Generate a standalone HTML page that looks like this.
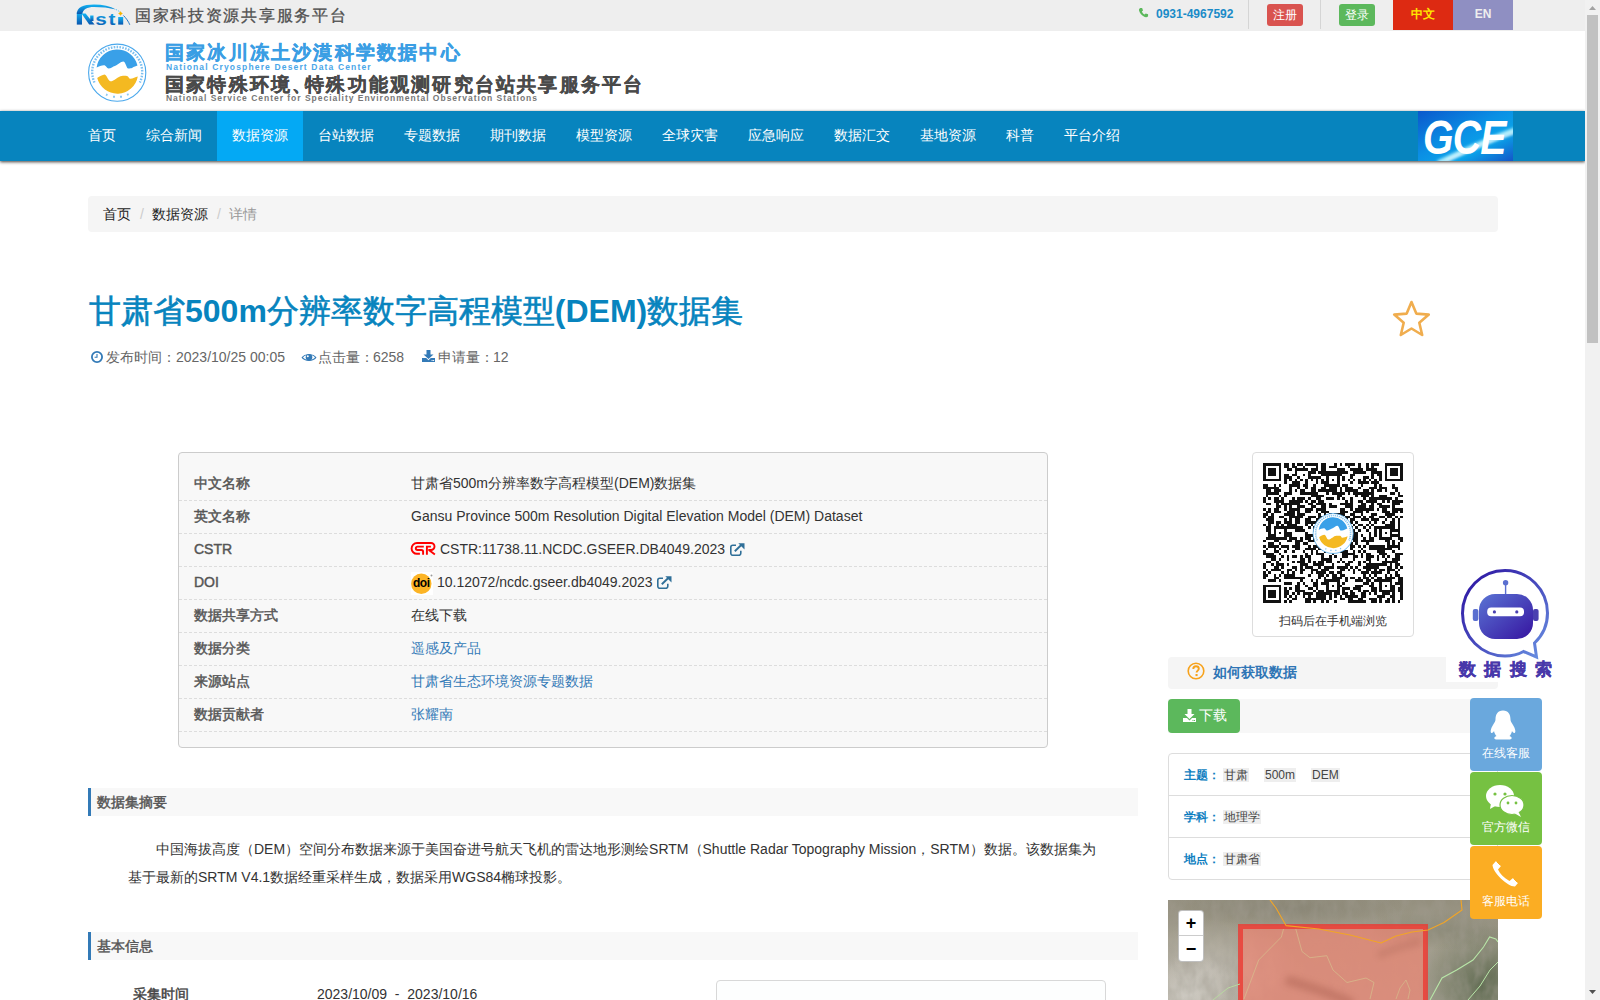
<!DOCTYPE html>
<html><head><meta charset="utf-8">
<style>
*{box-sizing:border-box;margin:0;padding:0}
html,body{width:1600px;height:1000px;overflow:hidden;background:#fff}
body{font-family:"Liberation Sans",sans-serif;font-size:14px;color:#333;position:relative;line-height:20px}
.abs{position:absolute}
#topbar{position:absolute;left:0;top:0;width:1585px;height:31px;background:#eeeeee}
#header{position:absolute;left:0;top:31px;width:1585px;height:80px;background:#fff}
#nav{position:absolute;left:0;top:111px;width:1585px;height:50px;background:#0784be;box-shadow:0 1px 3px 0 rgba(20,15,10,.8)}
#nav a{position:absolute;top:0;height:50px;line-height:49px;color:#fff;font-size:14px;padding:0 15px;text-decoration:none;white-space:nowrap}
#nav a.act{background:#04a9f4}
#scroll{position:absolute;left:1585px;top:0;width:15px;height:1000px;background:#f1f1f1}
#thumb{position:absolute;left:2px;top:15px;width:11px;height:328px;background:#c1c1c1}
.crumb{position:absolute;left:88px;top:196px;width:1410px;height:36px;background:#f5f5f5;border-radius:4px;padding:8px 15px;color:#222}
.crumb .sep{color:#ccc;padding:0 8px 0 9px}
.crumb .cur{color:#999}
h1{position:absolute;left:89px;top:288px;font-size:32px;line-height:46px;color:#0784be;font-weight:bold;white-space:nowrap}
h1 .cj{font-weight:normal;-webkit-text-stroke:.6px #0784be}
.meta{position:absolute;left:0;top:0;color:#666;white-space:nowrap}
.meta span{top:347px}
.panel{position:absolute;left:178px;top:452px;width:870px;height:296px;background:#f8f8f8;border:1px solid #ccc;border-radius:4px}
.row{position:absolute;left:0;width:868px;height:33px;border-bottom:1px dashed #ddd;line-height:30px}
.row .k{position:absolute;left:15px;font-weight:normal;color:#555;-webkit-text-stroke:.45px #555}
.row .v{position:absolute;left:232px;color:#333;white-space:nowrap}
.row .v.link{color:#337ab7}
.sec{position:absolute;left:88px;width:1050px;height:28px;background:#f8f8f8;border-left:3px solid #337ab7;line-height:28px;padding-left:6px;font-weight:normal;color:#555;-webkit-text-stroke:.45px #555}
.para{position:absolute;left:128px;top:835px;width:980px;line-height:28px;color:#333;text-indent:28px}
.kw{white-space:nowrap;line-height:16px}
.kw b{color:#0e7ec0;font-weight:bold}
.kw i{font-style:normal;background:#eee;color:#444;padding:0 1px}
.fb{left:1470px;width:72px;height:73px;border-radius:4px}
.fb span{position:absolute;left:0;top:47px;width:72px;text-align:center;color:#fff;font-size:12px;line-height:16px}
</style></head><body>
<div id="topbar">
<svg class="abs" style="left:72px;top:0" width="62" height="30" viewBox="0 0 62 30">
<defs><linearGradient id="ng" x1="0" y1="0" x2="0" y2="1"><stop offset="0" stop-color="#12b4f4"/><stop offset="1" stop-color="#0a56ae"/></linearGradient></defs>
<g fill="url(#ng)">
<rect x="4.8" y="12" width="5.2" height="12.6"/>
<path d="M4.8 14 C4.8 7.5, 11 4.6, 22 4.6 C 31 4.6, 38 6.5, 44 9.5 C 37 7.6, 30 6.9, 22 6.9 C 15 6.9, 10.8 9, 10.4 14 Z"/>
<path d="M9.5 13.5 L 13.6 13.5 L 22.6 24.6 L 17.2 24.6 Z"/>
<rect x="18.2" y="15.5" width="3.3" height="5.5"/>
<g transform="translate(23.2,24.6) scale(1.22,1)"><text x="0" y="0" font-family="Liberation Sans" font-weight="bold" font-size="17">s</text></g>
<g transform="translate(36.6,24.6) scale(1.3,1)"><text x="0" y="0" font-family="Liberation Sans" font-weight="bold" font-size="16">t</text></g>
<rect x="46.2" y="17" width="5" height="7.6"/>
</g>
<path d="M44 9.5 C 46 10.5, 47.5 11.5, 48.5 12.5" stroke="#5cc6f4" stroke-width="1" fill="none" stroke-dasharray="1 1"/>
<path d="M51.5 15.5 C 54 18, 56.5 21.5, 57.8 24.8" stroke="#2a7cc8" stroke-width="1" fill="none"/>
<path d="M48.5 11.3 l0.9 1.3 1.4 0.9 -1.4 0.9 -0.9 1.4 -0.9 -1.4 -1.4 -0.9 1.4 -0.9z" fill="#f7b500"/>
</svg>
<div class="abs" style="left:135px;top:6px;font-size:16px;line-height:20px;letter-spacing:1.7px;color:#505050;white-space:nowrap;-webkit-text-stroke:.3px #505050">国家科技资源共享服务平台</div>
<svg class="abs" style="left:1138px;top:7px" width="11" height="11" viewBox="0 0 12 12"><path d="M2.5 1 L4.5 1 L5.5 3.8 L4.2 5 C5 6.8 5.8 7.6 7.2 8.2 L8.4 7 L11 8 L11 10 C10 11.5 8 11.5 6 10.2 C3.8 8.8 2 6.5 1.2 4 C0.8 2.6 1.4 1.5 2.5 1Z" fill="#5cb85c"/></svg>
<div class="abs" style="left:1156px;top:6px;font-size:12px;line-height:16px;font-weight:bold;color:#1a8bc8;white-space:nowrap">0931-4967592</div>
<div class="abs" style="left:1248px;top:0;width:1px;height:29px;background:#d5d5d5"></div>
<div class="abs" style="left:1267px;top:4px;width:36px;height:22px;background:#d9534f;border-radius:3px;color:#fff;font-size:12px;line-height:22px;text-align:center">注册</div>
<div class="abs" style="left:1320px;top:0;width:1px;height:29px;background:#d5d5d5"></div>
<div class="abs" style="left:1339px;top:4px;width:36px;height:22px;background:#5cb85c;border-radius:3px;color:#fff;font-size:12px;line-height:22px;text-align:center">登录</div>
<div class="abs" style="left:1393px;top:0;width:60px;height:30px;background:#dd2a12;color:#ffe600;font-size:12px;line-height:28px;text-align:center;font-weight:bold">中文</div>
<div class="abs" style="left:1453px;top:0;width:60px;height:30px;background:#8f8fc2;color:#eee;font-size:12px;line-height:28px;text-align:center;font-weight:bold">EN</div>
</div>
<div id="header">
<svg class="abs" style="left:87px;top:11px" width="60" height="60" viewBox="0 0 60 60">
<circle cx="30.2" cy="30.7" r="28.6" fill="#fff" stroke="#4aa8ec" stroke-width="1.1"/>
<path d="M7.5 40.5 A25 25 0 1 1 52.9 40.5" fill="none" stroke="#7dc0f0" stroke-width="2.4" stroke-dasharray="1.6 1.3"/><path d="M19 52.5 l1.5 0.6 M26 54.8 h2 M33 54.8 h2 M40 52.8 l1.6 -0.7" stroke="#8cc8f2" stroke-width="2"/>
<path d="M9.6 25.6 C 12 24.5, 15 23, 17.6 23.3 C 19 24, 20 26.5, 21.4 26.5 C 24 26.5, 26 24.5, 27.8 24 C 31 22.5, 34 19.5, 36.1 19.5 C 38.5 19.2, 39.5 26.5, 41.2 26.5 C 43 26.5, 44 26, 45 25.9 C 47 25, 49 24, 50.5 23.6 A 20.8 20.8 0 0 0 9.6 25.6Z" fill="#39a0e8"/>
<path d="M10.2 36.1 C 12.5 34.5, 15.5 32.8, 17.6 32.6 C 20 33, 21 39, 23.3 39.3 C 27 39.5, 31 34, 34.8 33.9 C 37 33.8, 39 33.9, 40 33.9 C 41.5 34, 42 36.8, 43.2 36.8 C 46 36.5, 48.5 35.2, 50.8 34.5 A 20.8 20.8 0 0 1 10.2 36.1Z" fill="#f4b921"/>
</svg>
<div class="abs" style="left:165px;top:11px;font-size:19px;line-height:22px;font-weight:900;letter-spacing:2.2px;color:#3a9ee4;white-space:nowrap;-webkit-text-stroke:.35px #3a9ee4">国家冰川冻土沙漠科学数据中心</div>
<div class="abs" style="left:166px;top:32px;font-size:8.5px;line-height:9px;font-weight:bold;letter-spacing:1.15px;color:#4aa6e8;white-space:nowrap">National Cryosphere Desert Data Center</div>
<div class="abs" style="left:165px;top:43px;font-size:19px;line-height:22px;font-weight:900;letter-spacing:2.2px;color:#4a4a4a;white-space:nowrap;-webkit-text-stroke:.35px #4a4a4a">国家特殊环境<span style="letter-spacing:-9px">、</span><span style="margin-left:3px"></span>特殊功能观测研究台站共享服务平台</div>
<div class="abs" style="left:166px;top:63px;font-size:8.5px;line-height:9px;font-weight:bold;letter-spacing:0.98px;color:#777;white-space:nowrap">National Service Center for Speciality Environmental Observation Stations</div>
</div>
<div id="nav">
<a style="left:73px">首页</a>
<a style="left:131px">综合新闻</a>
<a class="act" style="left:217px">数据资源</a>
<a style="left:303px">台站数据</a>
<a style="left:389px">专题数据</a>
<a style="left:475px">期刊数据</a>
<a style="left:561px">模型资源</a>
<a style="left:647px">全球灾害</a>
<a style="left:733px">应急响应</a>
<a style="left:819px">数据汇交</a>
<a style="left:905px">基地资源</a>
<a style="left:991px">科普</a>
<a style="left:1049px">平台介绍</a>
<svg class="abs" style="left:1418px;top:0" width="95" height="50" viewBox="0 0 95 50">
<defs>
<linearGradient id="gbg" x1="0" y1="0" x2="1" y2="1"><stop offset="0" stop-color="#0a58cc"/><stop offset=".45" stop-color="#0b8fe4"/><stop offset=".7" stop-color="#0aa4ea"/><stop offset="1" stop-color="#1456c8"/></linearGradient>
<filter id="gbl" x="-50%" y="-50%" width="200%" height="200%"><feGaussianBlur stdDeviation="1.6"/></filter>
</defs>
<rect width="95" height="50" fill="url(#gbg)"/>
<path d="M20 52 C 45 40, 70 28, 100 18" stroke="#bff6ff" stroke-width="5" fill="none" filter="url(#gbl)" opacity=".9"/>
<path d="M28 50 C 50 40, 72 30, 96 22" stroke="#fff" stroke-width="1.6" fill="none" filter="url(#gbl)"/>
<g transform="translate(5,43) scale(0.8,1)"><text x="0" y="0" font-family="Liberation Sans" font-weight="bold" font-style="italic" font-size="49" fill="#fff" letter-spacing="-1">GCE</text></g>
</svg>
</div>
</div>

<div class="crumb">首页<span class="sep">/</span>数据资源<span class="sep">/</span><span class="cur">详情</span></div>

<h1><span class="cj">甘肃省</span>500m<span class="cj">分辨率数字高程模型</span>(DEM)<span class="cj">数据集</span></h1>
<div class="meta">
<svg class="abs" style="left:91px;top:351px" width="12" height="12" viewBox="0 0 12 12"><circle cx="6" cy="6" r="5.1" fill="none" stroke="#337ab7" stroke-width="1.8"/><path d="M6 3v3.2H3.6" fill="none" stroke="#337ab7" stroke-width="1.1"/></svg>
<span class="abs" style="left:106px">发布时间：</span><span class="abs" style="left:176px">2023/10/25 00:05</span>
<svg class="abs" style="left:301px;top:352px" width="16" height="11" viewBox="0 0 16 11"><path d="M0.5 5.5 C 3 1, 13 1, 15.5 5.5 C 13 10, 3 10, 0.5 5.5Z" fill="#337ab7"/><path d="M2 5.5 C 4.5 2.3, 11.5 2.3, 14 5.5 C 11.5 8.7, 4.5 8.7, 2 5.5Z" fill="#fff"/><circle cx="8" cy="5.3" r="3.3" fill="#337ab7"/><circle cx="6.8" cy="4.2" r="1" fill="#fff"/></svg>
<span class="abs" style="left:318px">点击量：</span><span class="abs" style="left:373px">6258</span>
<svg class="abs" style="left:422px;top:350px" width="13" height="12" viewBox="0 0 13 12"><path d="M4.5 0h4v4.5h3l-5 4.5-5-4.5h3z" fill="#337ab7"/><path d="M0 8h4.2l2.3 2.2L8.8 8H13v4H0z" fill="#337ab7"/><rect x="9.6" y="10" width="1" height="1" fill="#fff"/><rect x="11.1" y="10" width="1" height="1" fill="#fff"/></svg>
<span class="abs" style="left:438px">申请量：</span><span class="abs" style="left:493px">12</span>
</div>

<div class="panel">
<div class="row" style="top:15px"><span class="k">中文名称</span><span class="v">甘肃省500m分辨率数字高程模型(DEM)数据集</span></div>
<div class="row" style="top:48px"><span class="k">英文名称</span><span class="v">Gansu Province 500m Resolution Digital Elevation Model (DEM) Dataset</span></div>
<div class="row" style="top:81px"><span class="k">CSTR</span><svg class="abs" style="left:230px;top:5px" width="30" height="19" viewBox="0 0 30 19"><g fill="none" stroke="#f00" stroke-width="1.9"><path d="M10.9 14.8H8A5.4 5.4 0 0 1 8 4H22A3.5 3.5 0 0 1 22 11H19.3"/><path d="M14.8 7.6H8.5A1.7 1.7 0 0 0 8.5 11H12.3A1.8 1.8 0 0 1 14.1 12.8V15.7"/><path d="M17.9 15.7V7.6H21.9"/><path d="M20.2 11.2L25.9 15.5"/></g></svg><span class="v" style="left:261px">CSTR:11738.11.NCDC.GSEER.DB4049.2023</span><svg class="abs" style="left:551px;top:9px" width="15" height="13" viewBox="0 0 15 13"><path d="M6 2.3H2.8A2 2 0 0 0 0.8 4.3V10.3A2 2 0 0 0 2.8 12.3H8.8A2 2 0 0 0 10.8 10.3V7.8" fill="none" stroke="#2f6f98" stroke-width="1.6"/><path d="M4.8 8.2L11.5 1.8" stroke="#2f6f98" stroke-width="1.9"/><path d="M8.3 0.3H14.5V6.5Z" fill="#2f6f98"/></svg></div>
<div class="row" style="top:114px"><span class="k">DOI</span><svg class="abs" style="left:232px;top:5px" width="22" height="23" viewBox="0 0 22 23"><rect width="22" height="23" fill="#fff"/><circle cx="10.3" cy="11.7" r="10.2" fill="#fcb425"/><text x="10.3" y="15.3" font-family="Liberation Sans" font-weight="bold" font-size="12" fill="#000" text-anchor="middle" letter-spacing="-0.4">doi</text><circle cx="20.5" cy="3.5" r="1" fill="#999"/></svg><span class="v" style="left:258px">10.12072/ncdc.gseer.db4049.2023</span><svg class="abs" style="left:478px;top:9px" width="15" height="13" viewBox="0 0 15 13"><path d="M6 2.3H2.8A2 2 0 0 0 0.8 4.3V10.3A2 2 0 0 0 2.8 12.3H8.8A2 2 0 0 0 10.8 10.3V7.8" fill="none" stroke="#2f6f98" stroke-width="1.6"/><path d="M4.8 8.2L11.5 1.8" stroke="#2f6f98" stroke-width="1.9"/><path d="M8.3 0.3H14.5V6.5Z" fill="#2f6f98"/></svg></div>
<div class="row" style="top:147px"><span class="k">数据共享方式</span><span class="v">在线下载</span></div>
<div class="row" style="top:180px"><span class="k">数据分类</span><span class="v link">遥感及产品</span></div>
<div class="row" style="top:213px"><span class="k">来源站点</span><span class="v link">甘肃省生态环境资源专题数据</span></div>
<div class="row" style="top:246px"><span class="k">数据贡献者</span><span class="v link">张耀南</span></div>
</div>

<div class="sec" style="top:788px">数据集摘要</div>
<div class="para">中国海拔高度（DEM）空间分布数据来源于美国奋进号航天飞机的雷达地形测绘SRTM（Shuttle Radar Topography Mission，SRTM）数据。该数据集为基于最新的SRTM V4.1数据经重采样生成，数据采用WGS84椭球投影。</div>
<div class="sec" style="top:932px">基本信息</div>


<svg class="abs" style="left:1391px;top:299px" width="41" height="40" viewBox="0 0 41 40"><path d="M20.5 3 L25.3 14.6 L37.8 15.6 L28.3 23.8 L31.2 36 L20.5 29.5 L9.8 36 L12.7 23.8 L3.2 15.6 L15.7 14.6Z" fill="none" stroke="#f0ad4e" stroke-width="2.6" stroke-linejoin="round"/></svg>

<div class="abs" style="left:1252px;top:452px;width:162px;height:185px;border:1px solid #ddd;border-radius:4px;background:#fff">
<svg class="abs" style="left:10px;top:10px" width="140" height="140" viewBox="0 0 53 53" shape-rendering="crispEdges"><path d="M0 0h7v1h-7zM8 0h2v1h-2zM11 0h1v1h-1zM13 0h2v1h-2zM16 0h5v1h-5zM22 0h2v1h-2zM27 0h1v1h-1zM29 0h1v1h-1zM31 0h4v1h-4zM36 0h1v1h-1zM39 0h1v1h-1zM41 0h3v1h-3zM46 0h7v1h-7zM0 1h1v1h-1zM6 1h1v1h-1zM8 1h2v1h-2zM11 1h2v1h-2zM15 1h1v1h-1zM20 1h1v1h-1zM22 1h2v1h-2zM25 1h3v1h-3zM32 1h1v1h-1zM36 1h1v1h-1zM39 1h1v1h-1zM41 1h1v1h-1zM46 1h1v1h-1zM52 1h1v1h-1zM0 2h1v1h-1zM2 2h3v1h-3zM6 2h1v1h-1zM9 2h2v1h-2zM12 2h5v1h-5zM18 2h3v1h-3zM22 2h2v1h-2zM28 2h3v1h-3zM33 2h5v1h-5zM39 2h4v1h-4zM46 2h1v1h-1zM48 2h3v1h-3zM52 2h1v1h-1zM0 3h1v1h-1zM2 3h3v1h-3zM6 3h1v1h-1zM12 3h1v1h-1zM17 3h3v1h-3zM21 3h11v1h-11zM34 3h5v1h-5zM41 3h4v1h-4zM46 3h1v1h-1zM48 3h3v1h-3zM52 3h1v1h-1zM0 4h1v1h-1zM2 4h3v1h-3zM6 4h1v1h-1zM8 4h2v1h-2zM11 4h2v1h-2zM15 4h1v1h-1zM17 4h1v1h-1zM22 4h8v1h-8zM33 4h2v1h-2zM41 4h1v1h-1zM43 4h2v1h-2zM46 4h1v1h-1zM48 4h3v1h-3zM52 4h1v1h-1zM0 5h1v1h-1zM6 5h1v1h-1zM8 5h3v1h-3zM13 5h1v1h-1zM17 5h5v1h-5zM24 5h1v1h-1zM28 5h1v1h-1zM30 5h1v1h-1zM33 5h1v1h-1zM38 5h2v1h-2zM41 5h1v1h-1zM44 5h1v1h-1zM46 5h1v1h-1zM52 5h1v1h-1zM0 6h7v1h-7zM8 6h1v1h-1zM10 6h1v1h-1zM12 6h1v1h-1zM14 6h1v1h-1zM16 6h1v1h-1zM18 6h1v1h-1zM20 6h1v1h-1zM22 6h1v1h-1zM24 6h1v1h-1zM26 6h1v1h-1zM28 6h1v1h-1zM30 6h1v1h-1zM32 6h1v1h-1zM34 6h1v1h-1zM36 6h1v1h-1zM38 6h1v1h-1zM40 6h1v1h-1zM42 6h1v1h-1zM44 6h1v1h-1zM46 6h7v1h-7zM8 7h1v1h-1zM11 7h3v1h-3zM16 7h1v1h-1zM20 7h1v1h-1zM22 7h3v1h-3zM28 7h1v1h-1zM33 7h1v1h-1zM36 7h4v1h-4zM41 7h3v1h-3zM0 8h2v1h-2zM4 8h1v1h-1zM6 8h1v1h-1zM10 8h4v1h-4zM15 8h2v1h-2zM19 8h1v1h-1zM23 8h6v1h-6zM30 8h2v1h-2zM37 8h1v1h-1zM42 8h1v1h-1zM44 8h1v1h-1zM49 8h1v1h-1zM0 9h6v1h-6zM10 9h1v1h-1zM13 9h1v1h-1zM16 9h1v1h-1zM18 9h2v1h-2zM22 9h2v1h-2zM25 9h3v1h-3zM29 9h1v1h-1zM31 9h3v1h-3zM36 9h1v1h-1zM40 9h3v1h-3zM44 9h3v1h-3zM49 9h2v1h-2zM1 10h2v1h-2zM4 10h3v1h-3zM10 10h1v1h-1zM12 10h1v1h-1zM14 10h2v1h-2zM18 10h2v1h-2zM21 10h7v1h-7zM29 10h1v1h-1zM31 10h5v1h-5zM38 10h2v1h-2zM41 10h1v1h-1zM43 10h2v1h-2zM46 10h1v1h-1zM50 10h1v1h-1zM1 11h5v1h-5zM8 11h3v1h-3zM14 11h7v1h-7zM24 11h1v1h-1zM26 11h5v1h-5zM32 11h1v1h-1zM34 11h8v1h-8zM48 11h2v1h-2zM51 11h1v1h-1zM1 12h1v1h-1zM6 12h1v1h-1zM8 12h1v1h-1zM18 12h5v1h-5zM28 12h2v1h-2zM35 12h1v1h-1zM37 12h3v1h-3zM41 12h1v1h-1zM44 12h3v1h-3zM51 12h2v1h-2zM0 13h1v1h-1zM2 13h1v1h-1zM4 13h2v1h-2zM7 13h1v1h-1zM11 13h1v1h-1zM13 13h3v1h-3zM17 13h1v1h-1zM20 13h2v1h-2zM24 13h3v1h-3zM28 13h1v1h-1zM30 13h1v1h-1zM33 13h1v1h-1zM38 13h1v1h-1zM40 13h9v1h-9zM50 13h1v1h-1zM0 14h1v1h-1zM4 14h4v1h-4zM10 14h5v1h-5zM16 14h1v1h-1zM18 14h2v1h-2zM21 14h2v1h-2zM31 14h1v1h-1zM33 14h1v1h-1zM36 14h2v1h-2zM39 14h4v1h-4zM45 14h1v1h-1zM47 14h1v1h-1zM49 14h4v1h-4zM1 15h2v1h-2zM5 15h1v1h-1zM7 15h7v1h-7zM17 15h2v1h-2zM20 15h4v1h-4zM25 15h1v1h-1zM29 15h5v1h-5zM37 15h2v1h-2zM41 15h1v1h-1zM43 15h2v1h-2zM49 15h3v1h-3zM5 16h2v1h-2zM8 16h1v1h-1zM10 16h1v1h-1zM13 16h3v1h-3zM18 16h2v1h-2zM22 16h2v1h-2zM25 16h3v1h-3zM31 16h3v1h-3zM36 16h3v1h-3zM40 16h2v1h-2zM44 16h4v1h-4zM49 16h1v1h-1zM0 17h1v1h-1zM2 17h1v1h-1zM4 17h2v1h-2zM8 17h1v1h-1zM10 17h4v1h-4zM16 17h3v1h-3zM20 17h4v1h-4zM29 17h2v1h-2zM33 17h1v1h-1zM35 17h7v1h-7zM43 17h1v1h-1zM45 17h2v1h-2zM49 17h4v1h-4zM1 18h2v1h-2zM4 18h3v1h-3zM9 18h3v1h-3zM13 18h1v1h-1zM16 18h2v1h-2zM20 18h1v1h-1zM22 18h3v1h-3zM29 18h3v1h-3zM34 18h4v1h-4zM39 18h1v1h-1zM45 18h3v1h-3zM49 18h2v1h-2zM52 18h1v1h-1zM0 19h2v1h-2zM3 19h1v1h-1zM8 19h4v1h-4zM13 19h3v1h-3zM21 19h1v1h-1zM23 19h1v1h-1zM25 19h1v1h-1zM27 19h4v1h-4zM33 19h2v1h-2zM37 19h1v1h-1zM41 19h2v1h-2zM46 19h4v1h-4zM0 20h1v1h-1zM2 20h2v1h-2zM6 20h2v1h-2zM10 20h5v1h-5zM17 20h3v1h-3zM21 20h3v1h-3zM26 20h3v1h-3zM31 20h2v1h-2zM34 20h3v1h-3zM38 20h1v1h-1zM40 20h2v1h-2zM44 20h2v1h-2zM47 20h2v1h-2zM50 20h1v1h-1zM52 20h1v1h-1zM1 21h3v1h-3zM8 21h1v1h-1zM10 21h1v1h-1zM12 21h2v1h-2zM16 21h2v1h-2zM20 21h2v1h-2zM24 21h2v1h-2zM27 21h1v1h-1zM31 21h1v1h-1zM33 21h2v1h-2zM37 21h3v1h-3zM41 21h3v1h-3zM46 21h1v1h-1zM49 21h1v1h-1zM51 21h1v1h-1zM2 22h2v1h-2zM5 22h2v1h-2zM8 22h3v1h-3zM12 22h2v1h-2zM16 22h8v1h-8zM25 22h1v1h-1zM27 22h1v1h-1zM31 22h1v1h-1zM33 22h1v1h-1zM35 22h1v1h-1zM40 22h1v1h-1zM42 22h1v1h-1zM45 22h1v1h-1zM48 22h2v1h-2zM51 22h1v1h-1zM0 23h1v1h-1zM2 23h1v1h-1zM5 23h1v1h-1zM7 23h1v1h-1zM9 23h4v1h-4zM16 23h1v1h-1zM18 23h1v1h-1zM21 23h1v1h-1zM26 23h1v1h-1zM29 23h1v1h-1zM31 23h1v1h-1zM34 23h1v1h-1zM36 23h2v1h-2zM39 23h1v1h-1zM41 23h1v1h-1zM46 23h4v1h-4zM51 23h1v1h-1zM1 24h2v1h-2zM4 24h11v1h-11zM17 24h1v1h-1zM19 24h2v1h-2zM22 24h3v1h-3zM28 24h3v1h-3zM33 24h1v1h-1zM35 24h1v1h-1zM38 24h1v1h-1zM40 24h1v1h-1zM42 24h8v1h-8zM51 24h1v1h-1zM1 25h2v1h-2zM4 25h1v1h-1zM8 25h1v1h-1zM12 25h4v1h-4zM19 25h1v1h-1zM22 25h1v1h-1zM24 25h6v1h-6zM34 25h1v1h-1zM36 25h1v1h-1zM39 25h1v1h-1zM42 25h1v1h-1zM44 25h1v1h-1zM48 25h4v1h-4zM2 26h1v1h-1zM4 26h1v1h-1zM6 26h1v1h-1zM8 26h3v1h-3zM16 26h1v1h-1zM20 26h1v1h-1zM23 26h2v1h-2zM26 26h1v1h-1zM28 26h3v1h-3zM32 26h4v1h-4zM40 26h1v1h-1zM42 26h1v1h-1zM44 26h1v1h-1zM46 26h1v1h-1zM48 26h1v1h-1zM51 26h1v1h-1zM2 27h3v1h-3zM8 27h3v1h-3zM16 27h3v1h-3zM20 27h6v1h-6zM27 27h2v1h-2zM33 27h3v1h-3zM37 27h1v1h-1zM40 27h1v1h-1zM42 27h1v1h-1zM44 27h1v1h-1zM48 27h4v1h-4zM1 28h8v1h-8zM10 28h3v1h-3zM14 28h1v1h-1zM16 28h2v1h-2zM19 28h2v1h-2zM22 28h1v1h-1zM27 28h3v1h-3zM31 28h1v1h-1zM33 28h3v1h-3zM38 28h1v1h-1zM40 28h2v1h-2zM44 28h5v1h-5zM51 28h2v1h-2zM0 29h1v1h-1zM4 29h2v1h-2zM9 29h2v1h-2zM12 29h3v1h-3zM17 29h4v1h-4zM22 29h3v1h-3zM27 29h1v1h-1zM29 29h2v1h-2zM34 29h2v1h-2zM37 29h5v1h-5zM46 29h2v1h-2zM49 29h1v1h-1zM52 29h1v1h-1zM2 30h2v1h-2zM6 30h1v1h-1zM12 30h2v1h-2zM15 30h2v1h-2zM20 30h3v1h-3zM24 30h1v1h-1zM27 30h1v1h-1zM30 30h2v1h-2zM33 30h1v1h-1zM35 30h1v1h-1zM39 30h1v1h-1zM47 30h1v1h-1zM49 30h1v1h-1zM51 30h1v1h-1zM0 31h1v1h-1zM2 31h4v1h-4zM7 31h3v1h-3zM11 31h3v1h-3zM17 31h1v1h-1zM19 31h3v1h-3zM25 31h1v1h-1zM27 31h1v1h-1zM29 31h1v1h-1zM33 31h2v1h-2zM36 31h1v1h-1zM38 31h1v1h-1zM40 31h6v1h-6zM47 31h5v1h-5zM1 32h1v1h-1zM4 32h1v1h-1zM6 32h1v1h-1zM9 32h1v1h-1zM12 32h2v1h-2zM16 32h4v1h-4zM21 32h2v1h-2zM25 32h1v1h-1zM33 32h1v1h-1zM37 32h1v1h-1zM40 32h9v1h-9zM51 32h1v1h-1zM0 33h1v1h-1zM4 33h2v1h-2zM8 33h1v1h-1zM11 33h1v1h-1zM15 33h1v1h-1zM18 33h1v1h-1zM20 33h1v1h-1zM23 33h1v1h-1zM25 33h2v1h-2zM29 33h3v1h-3zM34 33h1v1h-1zM36 33h1v1h-1zM38 33h1v1h-1zM43 33h3v1h-3zM49 33h1v1h-1zM0 34h4v1h-4zM6 34h1v1h-1zM16 34h1v1h-1zM18 34h1v1h-1zM20 34h3v1h-3zM26 34h1v1h-1zM30 34h5v1h-5zM37 34h1v1h-1zM39 34h2v1h-2zM44 34h3v1h-3zM50 34h3v1h-3zM1 35h4v1h-4zM7 35h1v1h-1zM9 35h1v1h-1zM11 35h2v1h-2zM14 35h1v1h-1zM16 35h2v1h-2zM22 35h1v1h-1zM25 35h1v1h-1zM27 35h1v1h-1zM30 35h2v1h-2zM34 35h2v1h-2zM37 35h1v1h-1zM39 35h3v1h-3zM43 35h1v1h-1zM45 35h1v1h-1zM47 35h1v1h-1zM50 35h2v1h-2zM3 36h2v1h-2zM6 36h1v1h-1zM9 36h1v1h-1zM14 36h2v1h-2zM17 36h1v1h-1zM22 36h4v1h-4zM29 36h1v1h-1zM34 36h1v1h-1zM39 36h2v1h-2zM43 36h1v1h-1zM46 36h1v1h-1zM49 36h3v1h-3zM1 37h2v1h-2zM5 37h1v1h-1zM11 37h1v1h-1zM13 37h3v1h-3zM17 37h1v1h-1zM19 37h1v1h-1zM21 37h2v1h-2zM24 37h2v1h-2zM28 37h1v1h-1zM30 37h1v1h-1zM32 37h2v1h-2zM36 37h1v1h-1zM38 37h1v1h-1zM40 37h1v1h-1zM45 37h6v1h-6zM0 38h1v1h-1zM3 38h1v1h-1zM5 38h3v1h-3zM9 38h1v1h-1zM14 38h3v1h-3zM19 38h4v1h-4zM26 38h1v1h-1zM31 38h2v1h-2zM36 38h1v1h-1zM39 38h8v1h-8zM48 38h1v1h-1zM50 38h2v1h-2zM0 39h1v1h-1zM4 39h2v1h-2zM7 39h1v1h-1zM11 39h2v1h-2zM14 39h1v1h-1zM16 39h3v1h-3zM21 39h1v1h-1zM23 39h4v1h-4zM28 39h4v1h-4zM33 39h1v1h-1zM35 39h1v1h-1zM38 39h6v1h-6zM47 39h2v1h-2zM50 39h1v1h-1zM52 39h1v1h-1zM1 40h1v1h-1zM3 40h4v1h-4zM9 40h2v1h-2zM12 40h1v1h-1zM14 40h2v1h-2zM18 40h3v1h-3zM22 40h3v1h-3zM29 40h2v1h-2zM32 40h1v1h-1zM34 40h1v1h-1zM36 40h1v1h-1zM39 40h2v1h-2zM42 40h1v1h-1zM44 40h2v1h-2zM47 40h3v1h-3zM51 40h1v1h-1zM0 41h1v1h-1zM2 41h1v1h-1zM7 41h1v1h-1zM9 41h1v1h-1zM11 41h1v1h-1zM14 41h1v1h-1zM18 41h1v1h-1zM20 41h4v1h-4zM25 41h2v1h-2zM28 41h2v1h-2zM34 41h1v1h-1zM37 41h3v1h-3zM41 41h4v1h-4zM47 41h1v1h-1zM50 41h1v1h-1zM0 42h2v1h-2zM4 42h1v1h-1zM6 42h1v1h-1zM8 42h4v1h-4zM17 42h1v1h-1zM21 42h2v1h-2zM24 42h1v1h-1zM26 42h2v1h-2zM29 42h2v1h-2zM38 42h1v1h-1zM40 42h1v1h-1zM42 42h1v1h-1zM46 42h1v1h-1zM48 42h1v1h-1zM50 42h2v1h-2zM0 43h1v1h-1zM4 43h2v1h-2zM8 43h8v1h-8zM21 43h1v1h-1zM23 43h1v1h-1zM26 43h4v1h-4zM31 43h1v1h-1zM33 43h2v1h-2zM36 43h1v1h-1zM38 43h2v1h-2zM41 43h1v1h-1zM43 43h2v1h-2zM46 43h4v1h-4zM51 43h2v1h-2zM2 44h3v1h-3zM6 44h1v1h-1zM14 44h1v1h-1zM18 44h1v1h-1zM20 44h1v1h-1zM23 44h6v1h-6zM31 44h1v1h-1zM35 44h3v1h-3zM39 44h2v1h-2zM42 44h7v1h-7zM51 44h2v1h-2zM8 45h3v1h-3zM13 45h1v1h-1zM15 45h1v1h-1zM19 45h2v1h-2zM22 45h3v1h-3zM28 45h1v1h-1zM30 45h1v1h-1zM38 45h2v1h-2zM41 45h1v1h-1zM44 45h1v1h-1zM48 45h1v1h-1zM50 45h3v1h-3zM0 46h7v1h-7zM12 46h2v1h-2zM16 46h1v1h-1zM19 46h2v1h-2zM24 46h1v1h-1zM26 46h1v1h-1zM28 46h2v1h-2zM35 46h3v1h-3zM40 46h2v1h-2zM44 46h1v1h-1zM46 46h1v1h-1zM48 46h2v1h-2zM52 46h1v1h-1zM0 47h1v1h-1zM6 47h1v1h-1zM8 47h1v1h-1zM10 47h1v1h-1zM12 47h2v1h-2zM17 47h2v1h-2zM20 47h1v1h-1zM24 47h1v1h-1zM28 47h1v1h-1zM30 47h3v1h-3zM34 47h3v1h-3zM41 47h2v1h-2zM44 47h1v1h-1zM48 47h2v1h-2zM51 47h2v1h-2zM0 48h1v1h-1zM2 48h3v1h-3zM6 48h1v1h-1zM8 48h2v1h-2zM12 48h4v1h-4zM19 48h1v1h-1zM21 48h2v1h-2zM24 48h5v1h-5zM30 48h1v1h-1zM33 48h1v1h-1zM36 48h1v1h-1zM38 48h2v1h-2zM41 48h2v1h-2zM44 48h6v1h-6zM51 48h2v1h-2zM0 49h1v1h-1zM2 49h3v1h-3zM6 49h1v1h-1zM8 49h2v1h-2zM11 49h1v1h-1zM13 49h1v1h-1zM15 49h4v1h-4zM20 49h6v1h-6zM27 49h2v1h-2zM30 49h2v1h-2zM33 49h2v1h-2zM37 49h2v1h-2zM40 49h1v1h-1zM42 49h1v1h-1zM45 49h3v1h-3zM49 49h1v1h-1zM52 49h1v1h-1zM0 50h1v1h-1zM2 50h3v1h-3zM6 50h1v1h-1zM8 50h1v1h-1zM10 50h1v1h-1zM12 50h1v1h-1zM15 50h1v1h-1zM17 50h1v1h-1zM20 50h4v1h-4zM25 50h1v1h-1zM27 50h1v1h-1zM29 50h1v1h-1zM31 50h5v1h-5zM37 50h2v1h-2zM43 50h3v1h-3zM48 50h2v1h-2zM52 50h1v1h-1zM0 51h1v1h-1zM6 51h1v1h-1zM9 51h1v1h-1zM11 51h2v1h-2zM16 51h8v1h-8zM25 51h1v1h-1zM29 51h2v1h-2zM32 51h2v1h-2zM36 51h2v1h-2zM40 51h3v1h-3zM44 51h1v1h-1zM47 51h1v1h-1zM49 51h1v1h-1zM52 51h1v1h-1zM0 52h7v1h-7zM8 52h1v1h-1zM10 52h1v1h-1zM16 52h2v1h-2zM19 52h1v1h-1zM22 52h1v1h-1zM24 52h1v1h-1zM27 52h1v1h-1zM32 52h7v1h-7zM41 52h2v1h-2zM44 52h1v1h-1zM46 52h2v1h-2zM49 52h1v1h-1zM51 52h1v1h-1z" fill="#111"/></svg>
<svg class="abs" style="left:59px;top:59px" width="42" height="42" viewBox="0 0 60 60">
<circle cx="30.2" cy="30.7" r="28.6" fill="#fff" stroke="#4aa8ec" stroke-width="1.1"/>
<path d="M7.5 40.5 A25 25 0 1 1 52.9 40.5" fill="none" stroke="#7dc0f0" stroke-width="2.4" stroke-dasharray="1.6 1.3"/><path d="M19 52.5 l1.5 0.6 M26 54.8 h2 M33 54.8 h2 M40 52.8 l1.6 -0.7" stroke="#8cc8f2" stroke-width="2"/>
<path d="M9.6 25.6 C 12 24.5, 15 23, 17.6 23.3 C 19 24, 20 26.5, 21.4 26.5 C 24 26.5, 26 24.5, 27.8 24 C 31 22.5, 34 19.5, 36.1 19.5 C 38.5 19.2, 39.5 26.5, 41.2 26.5 C 43 26.5, 44 26, 45 25.9 C 47 25, 49 24, 50.5 23.6 A 20.8 20.8 0 0 0 9.6 25.6Z" fill="#39a0e8"/>
<path d="M10.2 36.1 C 12.5 34.5, 15.5 32.8, 17.6 32.6 C 20 33, 21 39, 23.3 39.3 C 27 39.5, 31 34, 34.8 33.9 C 37 33.8, 39 33.9, 40 33.9 C 41.5 34, 42 36.8, 43.2 36.8 C 46 36.5, 48.5 35.2, 50.8 34.5 A 20.8 20.8 0 0 1 10.2 36.1Z" fill="#f4b921"/>
</svg>
<div class="abs" style="left:0;top:160px;width:160px;text-align:center;font-size:12px;line-height:16px;color:#333">扫码后在手机端浏览</div>
</div>

<div class="abs" style="left:1168px;top:657px;width:330px;height:32px;background:#f5f5f5;border-radius:4px">
<svg class="abs" style="left:19px;top:5px" width="18" height="18" viewBox="0 0 18 18"><circle cx="9" cy="9" r="7.8" fill="none" stroke="#f7a21b" stroke-width="1.6"/><path d="M6.3 7 C6.3 5.2 7.5 4.3 9 4.3 C10.6 4.3 11.8 5.3 11.8 6.8 C11.8 8.6 9.6 8.7 9.6 10.6" fill="none" stroke="#f7a21b" stroke-width="1.9"/><rect x="8.5" y="12" width="2.1" height="2.1" fill="#f7a21b"/></svg>
<div class="abs" style="left:45px;top:5px;font-size:14px;line-height:20px;font-weight:bold;color:#2f75b5">如何获取数据</div>
</div>

<div class="abs" style="left:1446px;top:566px;width:139px;height:116px;background:#fff"></div>
<svg class="abs" style="left:1458px;top:568px" width="96" height="96" viewBox="0 0 96 96">
<defs><linearGradient id="rg" x1="0" y1="0" x2="1" y2="1"><stop offset="0" stop-color="#2a10a0"/><stop offset=".55" stop-color="#4a50c0"/><stop offset="1" stop-color="#6a94e4"/></linearGradient>
<linearGradient id="hg" x1="0" y1="0" x2="1" y2="1"><stop offset="0" stop-color="#5a74d4"/><stop offset="1" stop-color="#3614a0"/></linearGradient></defs>
<path d="M47 2.5 C 70.5 2.5, 89.5 21.5, 89.5 45 C 89.5 57, 84.5 67.5, 76.5 75 L 78.5 89 L 65.5 83.5 C 60 86.5, 53.5 88, 47 88 C 23.5 88, 4.5 69, 4.5 45.3 C 4.5 21.5, 23.5 2.5, 47 2.5Z" fill="none" stroke="url(#rg)" stroke-width="3"/>
<circle cx="47.6" cy="14.8" r="2.7" fill="#5a6fd0"/><rect x="46.9" y="16" width="1.4" height="11" fill="#5a6fd0"/>
<rect x="21" y="26" width="54" height="45" rx="16" fill="url(#hg)"/>
<rect x="14.8" y="41" width="5.6" height="12" rx="2" fill="#5a6fd0"/><rect x="75" y="41" width="5.6" height="12" rx="2" fill="#4a40b0"/>
<rect x="29.2" y="39.4" width="36.8" height="8.8" rx="4" fill="#fff"/>
<circle cx="36.4" cy="43.9" r="1.6" fill="#4a40b0"/><circle cx="58.8" cy="43.9" r="1.6" fill="#4a40b0"/>
</svg>
<div class="abs" style="left:1459px;top:657px;font-size:17px;line-height:26px;font-weight:bold;letter-spacing:8.3px;color:#4838aa;white-space:nowrap;-webkit-text-stroke:.4px #4838aa">数据搜索</div>

<div class="abs" style="left:1168px;top:699px;width:330px;height:34px;background:#f7f7f7"></div>
<div class="abs" style="left:1168px;top:699px;width:72px;height:34px;background:#5cb85c;border-radius:4px;color:#fff;font-size:14px;line-height:32px">
<svg class="abs" style="left:15px;top:10px" width="13" height="13" viewBox="0 0 13 13"><path d="M4.5 0h4v5h3l-5 5-5-5h3z" fill="#fff"/><path d="M0 9h4l2.5 2.5L9 9h4v4H0z" fill="#fff"/><rect x="9.5" y="11" width="1" height="1" fill="#5cb85c"/><rect x="11" y="11" width="1" height="1" fill="#5cb85c"/></svg>
<span class="abs" style="left:31px;top:0">下载</span></div>

<div class="abs" style="left:1168px;top:753px;width:330px;height:127px;border:1px solid #ddd;border-radius:4px;background:#fff;font-size:12px">
<div class="abs" style="left:0;top:41px;width:328px;height:1px;background:#ddd"></div>
<div class="abs" style="left:0;top:83px;width:328px;height:1px;background:#ddd"></div>
<div class="abs kw" style="left:15px;top:13px"><b>主题：</b><i style="margin-left:3px">甘肃</i><i style="margin-left:15px">500m</i><i style="margin-left:15px">DEM</i></div>
<div class="abs kw" style="left:15px;top:55px"><b>学科：</b><i style="margin-left:3px">地理学</i></div>
<div class="abs kw" style="left:15px;top:97px"><b>地点：</b><i style="margin-left:3px">甘肃省</i></div>
</div>

<div class="abs" style="left:1168px;top:900px;width:330px;height:100px;overflow:hidden;background:#a39e8f">
<div class="abs" style="left:0;top:0;width:330px;height:100px;background:
radial-gradient(ellipse 60px 40px at 20px 95px,#cfcbc3 0,rgba(207,203,195,0) 100%),
radial-gradient(ellipse 90px 50px at 40px 70px,#bdb8ae 0,rgba(189,184,174,0) 100%),
radial-gradient(ellipse 70px 60px at 320px 85px,#5f6a50 0,rgba(95,106,80,0) 100%),
radial-gradient(ellipse 120px 18px at 120px 8px,#8a8676 0,rgba(138,134,118,0) 100%),
radial-gradient(ellipse 90px 20px at 280px 30px,#8c8a78 0,rgba(140,138,120,0) 100%),
linear-gradient(180deg,#948f7e 0%,#a29d8c 40%,#a6a192 100%)"></div>
<svg class="abs" style="left:0;top:0" width="330" height="100" viewBox="0 0 330 100">
<defs>
<filter id="mbl" x="-50%" y="-50%" width="200%" height="200%"><feGaussianBlur stdDeviation="3"/></filter><filter id="tex" x="0" y="0" width="100%" height="100%"><feTurbulence type="fractalNoise" baseFrequency="0.09 0.05" numOctaves="3" seed="4"/><feColorMatrix type="matrix" values="0 0 0 0 0.35  0 0 0 0 0.33  0 0 0 0 0.28  0 0 0 -1.6 1.05"/></filter>
</defs>
<rect width="330" height="100" filter="url(#tex)" opacity=".6"/>
<rect x="72" y="26" width="186" height="80" fill="#ff806c" opacity=".58"/>
<path d="M118 80 C 140 86, 165 94, 185 104" stroke="#8a4030" stroke-width="10" fill="none" opacity=".25" filter="url(#mbl)"/>
<path d="M210 56 C 220 50, 235 46, 252 42" stroke="#7a4030" stroke-width="7" fill="none" opacity=".15" filter="url(#mbl)"/>
<rect x="72.5" y="26.5" width="185" height="80" fill="none" stroke="#ea3c34" stroke-width="5" opacity=".82"/>
<path d="M102 0 L108 8 L118 25.6 L151 29 L182 35 L213 43 L228 36 L244 32 L260 30 L276 22.5 L294 10 L293 0" stroke="#f2a526" stroke-width="1.1" fill="none" stroke-linejoin="round"/>
<path d="M262 100 L274 78 L288.7 70 L305 60 L315.5 47 L321.6 37 L327.8 39 L330 42" stroke="#b8e6a8" stroke-width="1.1" fill="none"/>
<path d="M300 100 L 312 86 L 322 70 L 330 62" stroke="#b8e6a8" stroke-width="1" fill="none"/>
<path d="M45 100 L 60 88 L 72 84" stroke="#b8d8a0" stroke-width="1" fill="none"/>
<path d="M76 99 L90.7 60 L113.4 37 L115.5 29" stroke="#d6c890" stroke-width=".8" fill="none" opacity=".75"/>
<path d="M127.8 29 L134 51.5 L142 57.7 L158.8 55.7 L165 70 L179 82.5 L198 78 L206 82.5 L202 99" stroke="#d6c890" stroke-width=".8" fill="none" opacity=".75"/>
<path d="M228 99 L 232 88 L 238 80 L 242 90 L 240 99" stroke="#d6c890" stroke-width=".8" fill="none" opacity=".7"/>
</svg>
<div class="abs" style="left:10px;top:10px;width:26px;height:52px;background:#fff;border-radius:4px;border:1px solid rgba(0,0,0,.25)">
<div class="abs" style="left:0;top:0;width:24px;height:25px;border-bottom:1px solid #ccc;text-align:center;font:bold 18px/25px 'Liberation Sans';color:#000">+</div>
<div class="abs" style="left:0;top:26px;width:24px;height:25px;text-align:center;font:bold 18px/24px 'Liberation Sans';color:#000">&minus;</div>
</div>
</div>

<div class="abs fb" style="top:698px;background:#6aa8dd">
<svg class="abs" style="left:17px;top:11px" width="32" height="32" viewBox="0 0 32 32"><path d="M16 1.5 C 21.5 1.5, 23.5 5.5, 23.5 10.5 C 23.5 12.5, 24.5 13.5, 26 16 C 28.5 20, 29 23.5, 27.5 24 C 26.5 24.3, 25.5 23, 25 22 C 24.5 24.5, 23.5 26, 22.5 27 C 25.5 28, 25.5 30.5, 22 30.5 L 10 30.5 C 6.5 30.5, 6.5 28, 9.5 27 C 8.5 26, 7.5 24.5, 7 22 C 6.5 23, 5.5 24.3, 4.5 24 C 3 23.5, 3.5 20, 6 16 C 7.5 13.5, 8.5 12.5, 8.5 10.5 C 8.5 5.5, 10.5 1.5, 16 1.5Z" fill="#fff"/></svg>
<span>在线客服</span></div>
<div class="abs fb" style="top:772px;background:#76c142">
<svg class="abs" style="left:15px;top:12px" width="42" height="34" viewBox="0 0 42 34"><ellipse cx="15" cy="12" rx="14" ry="11" fill="#fff"/><path d="M6 19 L5 25 L12 21Z" fill="#fff"/><ellipse cx="27" cy="21" rx="12" ry="9.5" fill="#fff" stroke="#76c142" stroke-width="1.2"/><path d="M33 27 L36 33 L29 29Z" fill="#fff"/><circle cx="10" cy="10" r="1.6" fill="#76c142"/><circle cx="20" cy="10" r="1.6" fill="#76c142"/><circle cx="23" cy="19" r="1.4" fill="#76c142"/><circle cx="31" cy="19" r="1.4" fill="#76c142"/></svg>
<span>官方微信</span></div>
<div class="abs fb" style="top:846px;background:#fbad23">
<svg class="abs" style="left:20px;top:13px" width="30" height="30" viewBox="0 0 30 30"><path d="M6 2 L11 7 L8 10.5 C 10 15, 14 19, 19.5 22 L 23 19 L 28 24 L 25 27.5 C 18 28, 3 14, 2.5 6Z" fill="#fff"/><path d="M6.5 2.5 l4 4" stroke="#fbad23" stroke-width="1"/><path d="M23.5 19.5 l4 4" stroke="#fbad23" stroke-width="1"/></svg>
<span>客服电话</span></div>

<div class="abs" style="left:133px;top:984px;font-weight:normal;color:#444;-webkit-text-stroke:.45px #444">采集时间</div>
<div class="abs" style="left:317px;top:984px;color:#333;white-space:pre">2023/10/09  -  2023/10/16</div>
<div class="abs" style="left:716px;top:980px;width:390px;height:40px;border:1px solid #d8d8d8;border-radius:4px;background:#fdfefe"></div>

<div id="scroll"><div id="thumb"></div><svg class="abs" style="left:0;top:0" width="15" height="1000"><path d="M4 10h7l-3.5-4z" fill="#a3a3a3"/><path d="M4 990h7l-3.5 4z" fill="#505050"/></svg></div>
</body></html>
